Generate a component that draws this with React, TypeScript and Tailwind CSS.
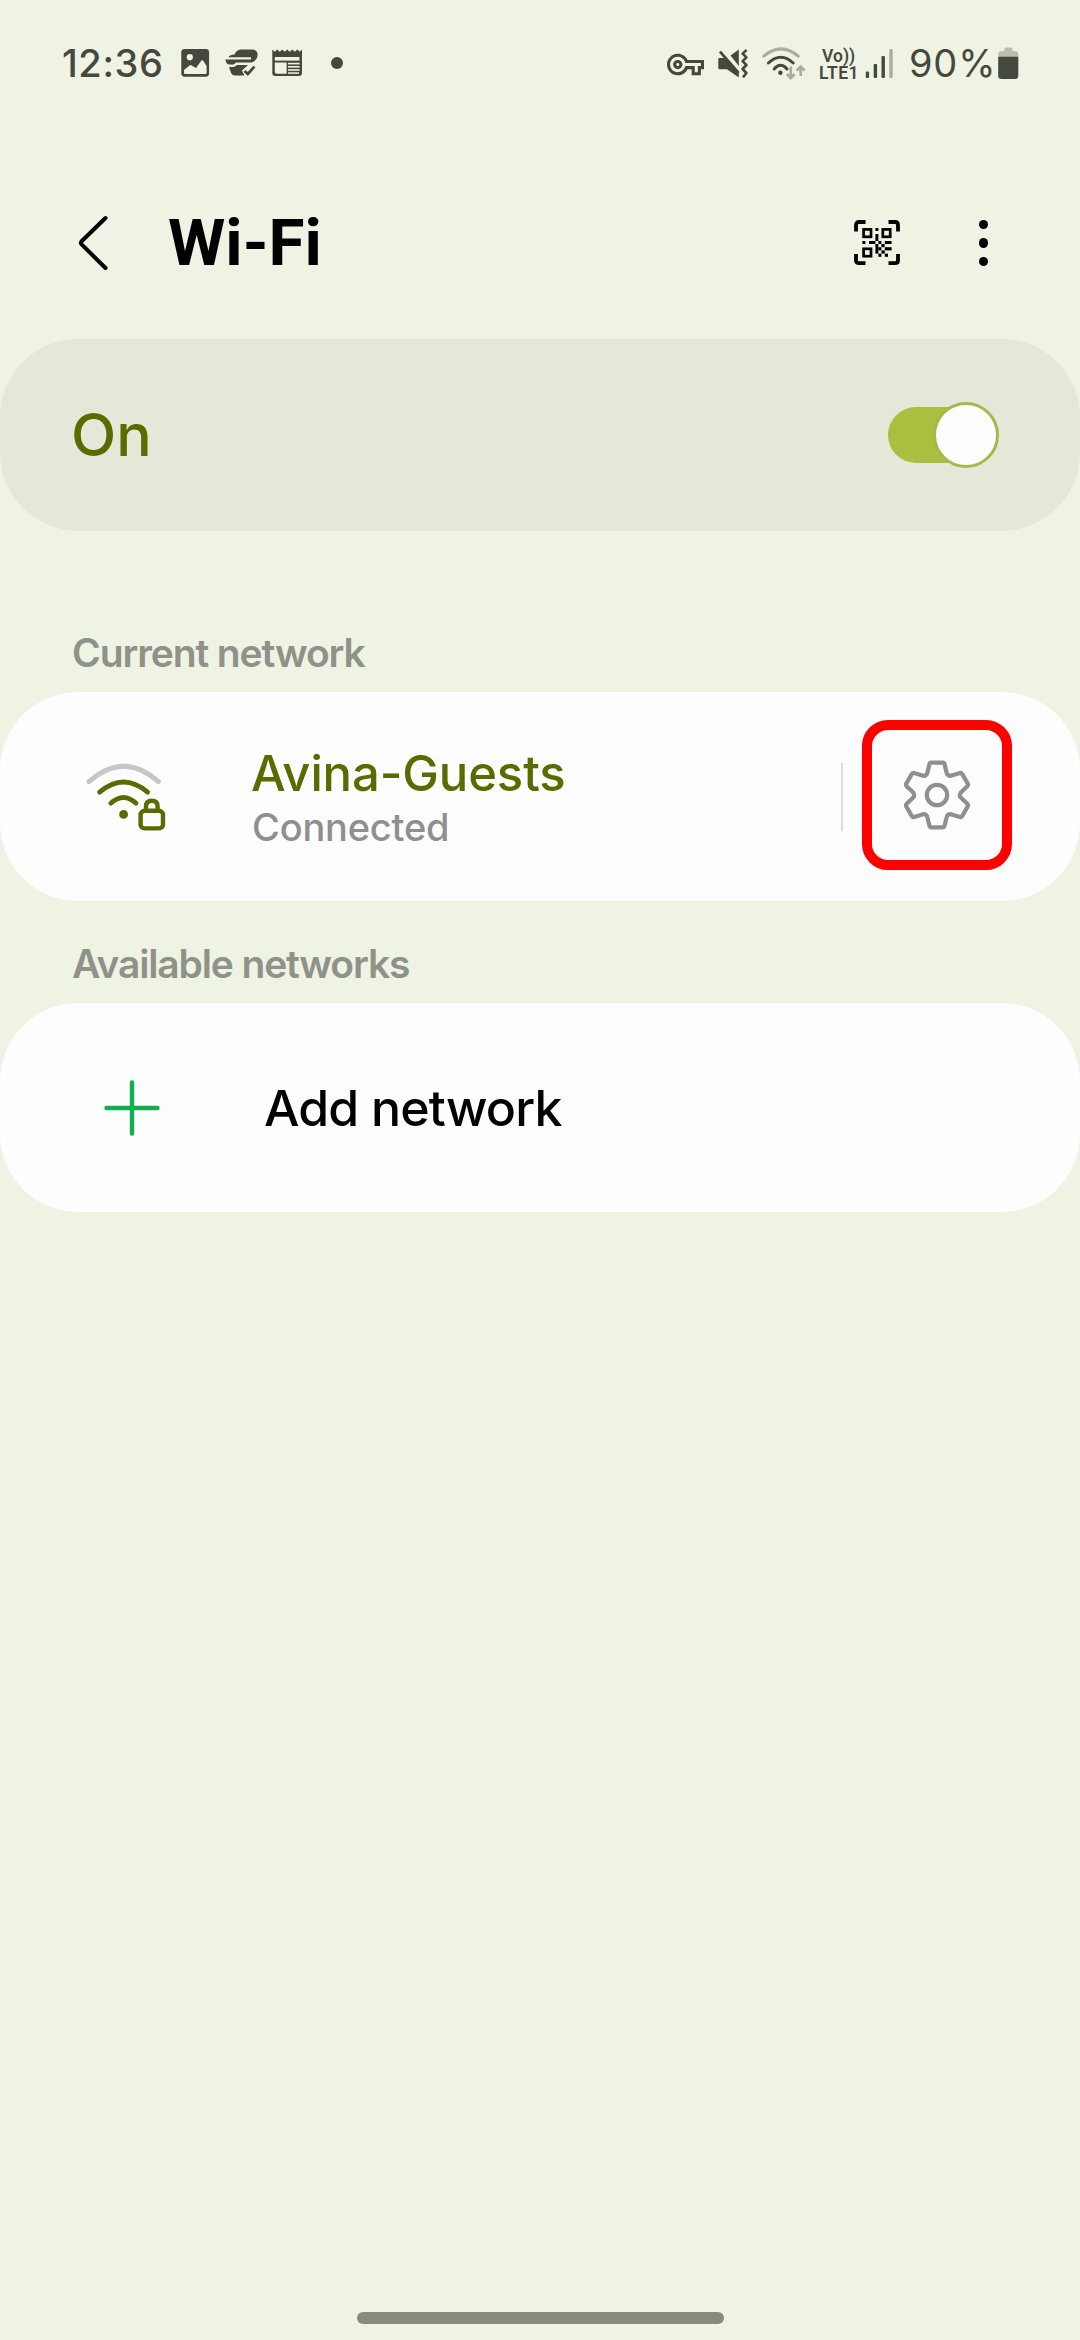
import type { ReactNode } from "react";
import { MdOutlineVpnKey } from "react-icons/md";

const INK = "#45493d";
const PAPER = "#eff3e3";

function PictureIcon() {
  return (
    <svg width="29" height="30" viewBox="0 0 29 30">
      <rect x="0.3" y="0.9" width="27.8" height="27.8" rx="3.4" fill={INK} />
      <circle cx="8.8" cy="9.2" r="3.1" fill={PAPER} />
      <path d="M3 22 L8.6 17.4 Q9.6 16.6 10.6 17.4 L15 20 L20.4 12.6 Q21.2 11.8 22 12.6 L25.6 18 V25 Q25.6 26 24.6 26 H4 Q3 26 3 25 Z" fill={PAPER} />
    </svg>
  );
}

function HandIcon() {
  return (
    <svg width="34" height="30" viewBox="0 0 34 30" fill={INK}>
      <path d="M9.5 6.6 Q11.5 1.5 16.5 1.5 H27 Q32.6 1.5 32.6 7 Q32.6 10.5 30 12.4 Q28 14.6 25 14.6 H11 L8.6 16.6 H4 Q1.4 16.6 0.3 11.6 H26 V9.2 H3.4 Q5 6.8 9.5 6.6 Z" />
      <path d="M4 19 H9 L12 17 H23 L17 22.4 L19.4 27.6 H10 Q6.5 27.6 5.6 23.5 Z" />
      <path d="M19.6 23 L22.8 26 L29.4 18.6" fill="none" stroke={INK} strokeWidth="2.8" />
    </svg>
  );
}

function NewsIcon() {
  return (
    <svg width="31" height="30" viewBox="0 0 31 30">
      <path d="M0.3 1.5 L2.8 3.8 L5.3 1.5 L7.8 3.8 L10.3 1.5 L12.8 3.8 L15.3 1.5 L17.8 3.8 L20.3 1.5 L22.8 3.8 L25.3 1.5 L27.8 3.8 L30 1.5 V25 Q30 28 27 28 H3.3 Q0.3 28 0.3 25 Z" fill={INK} />
      <g fill={PAPER}>
        <rect x="2.8" y="9" width="24.6" height="3.6" />
        <path d="M2.8 14.6 H14.6 V25.8 H4.8 Q2.8 25.8 2.8 23.8 Z" />
        <rect x="16" y="14.8" width="11.6" height="1.6" />
        <rect x="16" y="18" width="11.6" height="1.6" />
        <rect x="16" y="21.2" width="11.6" height="1.6" />
        <rect x="16" y="24.3" width="11" height="1.5" />
      </g>
    </svg>
  );
}

function MuteIcon() {
  return (
    <svg width="30" height="32" viewBox="718 47 30 32">
      <path d="M719.5 58 H724.5 L738.8 73.5 V77.6 L727 69.2 H719.5 Q718.3 69.2 718.3 68 V59.2 Q718.3 58 719.5 58 Z" fill={INK} />
      <path d="M730.5 55.5 L738.8 49.4 V66 Z" fill={INK} />
      <path d="M720 51.6 L738.6 73" stroke={INK} strokeWidth="2.8" />
      <path d="M746.6 50 L742.6 53.6 L746.4 57.4 L742.6 61.2 L746.4 65 L742.6 69 L746.4 73 L743 77.4" fill="none" stroke={INK} strokeWidth="2.6" strokeLinejoin="round" />
    </svg>
  );
}

function StatusWifiIcon() {
  return (
    <svg width="44" height="34" viewBox="762 46 44 34" fill="none" strokeWidth="3" strokeLinecap="round">
      <path d="M763.8 56.2 Q781 41.6 798.2 56.2" stroke="#a9ada0" />
      <path d="M768.4 63 Q780.8 51.6 793.2 63" stroke={INK} />
      <path d="M774.2 69 Q780.6 61.6 787 69" stroke={INK} />
      <circle cx="780.4" cy="72.8" r="2.2" fill={INK} />
      <g stroke="#a9ada0" strokeWidth="2.7" strokeLinecap="butt">
        <path d="M790.8 66.4 V78 M786.8 74 L790.8 78 L794.8 74" />
        <path d="M800.7 76 V66.6 M796.7 70.6 L800.7 66.6 L804.7 70.6" />
      </g>
    </svg>
  );
}

function SignalIcon() {
  return (
    <svg width="28" height="32" viewBox="865 47 28 32" fill={INK}>
      <rect x="865.8" y="71.4" width="3.3" height="6.6" rx="1" />
      <rect x="873.7" y="64" width="3.4" height="14" rx="1" />
      <rect x="881.5" y="56" width="3.4" height="22" rx="1" />
      <rect x="889.3" y="49" width="3.4" height="29" rx="1" fill="#a9ada0" />
    </svg>
  );
}

function BatteryIcon() {
  return (
    <svg width="21" height="32" viewBox="998 47 21 32">
      <path d="M1004.3 51 V49 Q1004.3 47.4 1006 47.4 H1010.6 Q1012.3 47.4 1012.3 49 V51 H1015 Q1018.3 51 1018.3 54.3 V57 H998.2 V54.3 Q998.2 51 1001.5 51 Z" fill="#babeb0" />
      <path d="M998.2 56.8 H1018.3 V75.8 Q1018.3 79 1015 79 H1001.5 Q998.2 79 998.2 75.8 Z" fill={INK} />
    </svg>
  );
}

function StatusBar() {
  return (
    <header className="flex h-[126px] items-center pr-[61px] pl-[62px] text-[38px] leading-[40px] font-medium text-[#45493d]">
      <span className="w-[119px] tracking-[0.6px]">12:36</span>
      <PictureIcon />
      <span className="ml-[15px]"><HandIcon /></span>
      <span className="ml-[13px]"><NewsIcon /></span>
      <span className="ml-[28px] size-3 rounded-full bg-[#45493d]" />
      <div className="ml-auto flex items-center">
        <MdOutlineVpnKey size={37} className="mt-[2px]" />
        <span className="ml-[14px]"><MuteIcon /></span>
        <span className="ml-[14px]"><StatusWifiIcon /></span>
        <span className="ml-[13px] flex w-[46px] flex-col pt-[3px] font-['Roboto',sans-serif] text-[17.5px] leading-[17px] font-semibold">
          <span className="pl-[3px]">Vo))</span>
          <span className="tracking-[0.5px]">LTE1</span>
        </span>
        <SignalIcon />
        <span className="ml-[16px] w-[89px] font-normal tracking-[0.8px]">90%</span>
        <BatteryIcon />
      </div>
    </header>
  );
}

const QR_MODULES: [number, number, number, number][] = [
  [21.4, 8, 3, 3], [21.4, 14, 3, 7], [8.4, 21, 3, 3], [15, 21, 6.4, 3], [24.4, 21, 3, 3], [30.8, 21, 6.8, 3],
  [21.4, 24, 3, 9.6], [27.4, 24, 3.2, 3.2], [24.4, 27.2, 3, 3.2], [30.8, 27.2, 6.8, 3.2], [27.4, 30.4, 3.4, 3.2],
  [24.4, 33.6, 3, 3.2], [30.8, 33.6, 3.2, 3.2],
];

function QrScanIcon() {
  return (
    <svg width="46" height="46" viewBox="0 0 46 46" fill="none" stroke="#000">
      <path d="M2 11.5 V5 Q2 2 5 2 H11.5 M34.5 2 H41 Q44 2 44 5 V11.5 M44 34 V40.5 Q44 43.2 41 43.2 H34.5 M11.5 43.2 H5 Q2 43.2 2 40.5 V34" strokeWidth="3.8" />
      <g strokeWidth="2.7">
        <rect x="9.6" y="9.4" width="7.4" height="7.4" />
        <rect x="28.8" y="9.4" width="7.4" height="7.4" />
        <rect x="9.6" y="28.8" width="7.4" height="7.4" />
      </g>
      <g fill="#000" stroke="none">
        {QR_MODULES.map(([x, y, w, h]) => (
          <rect key={`${x}-${y}`} x={x} y={y} width={w} height={h} />
        ))}
      </g>
    </svg>
  );
}

function TitleBar() {
  return (
    <div className="flex h-[213px] items-start pt-[75px] pr-[92px] pl-[78px] text-black">
      <div className="flex h-[84px] w-full items-center">
        <svg width="30" height="56" viewBox="0 0 30 56">
          <path d="M27.5 3 L3.6 26.2 Q2.2 27.8 3.6 29.4 L27.5 53" fill="none" stroke="#000" strokeWidth="4" strokeLinecap="round" strokeLinejoin="round" />
        </svg>
        <h1 className="-mt-px ml-[60px] font-['Roboto',sans-serif] text-[65.5px] leading-[64px] font-bold">Wi-Fi</h1>
        <span className="ml-auto"><QrScanIcon /></span>
        <div className="ml-[79px] flex flex-col gap-[9.4px]">
          <i className="size-[9.4px] rounded-full bg-black" />
          <i className="size-[9.4px] rounded-full bg-black" />
          <i className="size-[9.4px] rounded-full bg-black" />
        </div>
      </div>
    </div>
  );
}

function Toggle() {
  return (
    <div className="flex h-[56px] w-[111px] items-center justify-end rounded-full bg-[linear-gradient(90deg,#a8bf40_80px,transparent_80px)]">
      <span className="size-[66px] shrink-0 rounded-full border-3 border-[#a5b94a] bg-[#fdfdfd]" />
    </div>
  );
}

function SectionLabel({ className, children }: { className: string; children: ReactNode }) {
  return (
    <h2 className={`flex items-end pl-[72px] text-[39px] leading-[40px] font-semibold text-[#8f9289] ${className}`}>
      {children}
    </h2>
  );
}

function SecureWifiIcon() {
  return (
    <svg width="82" height="72" viewBox="86 760 82 72" fill="none" strokeWidth="4.8" strokeLinecap="round">
      <path d="M89 780.6 Q123.7 749.8 158.4 780.6" stroke="#c6c6c6" />
      <path d="M99.6 791.2 Q123.6 770.8 147.6 791.2" stroke="#5a6b00" />
      <path d="M110.8 802.2 Q123.6 790.6 136 802.2" stroke="#5a6b00" />
      <circle cx="123.6" cy="813.4" r="4.4" fill="#5a6b00" />
      <rect x="140.6" y="809.8" width="22.4" height="17.6" rx="4" stroke="#5a6b00" strokeWidth="4.4" />
      <path d="M146 809 V805.4 Q146 799.8 151.8 799.8 Q157.6 799.8 157.6 805.4 V809" stroke="#5a6b00" strokeWidth="4.4" strokeLinecap="butt" />
    </svg>
  );
}

const polar = (r: number, deg: number) => {
  const a = ((deg - 90) * Math.PI) / 180;
  return `${(r * Math.cos(a)).toFixed(2)} ${(r * Math.sin(a)).toFixed(2)}`;
};

// Six-tooth outline: flat tooth tips joined by rounded valleys.
const GEAR_PATH =
  [0, 60, 120, 180, 240, 300]
    .map((d) => `${d ? "L" : "M"}${polar(32.8, d - 10)} L${polar(32.8, d + 10)} Q${polar(33, d + 13)} ${polar(31, d + 14.5)} L${polar(25, d + 22)} Q${polar(20.6, d + 30)} ${polar(25, d + 38)} L${polar(31, d + 45.5)} Q${polar(33, d + 47)} ${polar(32.8, d + 50)}`)
    .join(" ") + " Z";

function GearIcon() {
  return (
    <svg width="72" height="72" viewBox="-36 -36 72 72" fill="none" stroke="#8f8f8f" strokeWidth="4.2" strokeLinejoin="round">
      <path d={GEAR_PATH} />
      <circle r="10.2" />
    </svg>
  );
}

export default function App() {
  return (
    <div className="relative flex h-[2340px] w-[1080px] flex-col overflow-hidden bg-[#eff3e3] font-['Inter',sans-serif]">
      <StatusBar />
      <TitleBar />

      <section className="flex h-[192px] items-center justify-between rounded-[78px] bg-[#e4e8d9] pr-[81px] pl-[71px]">
        <span className="text-[59px] leading-[60px] font-medium text-[#5a6b00]">On</span>
        <Toggle />
      </section>

      <SectionLabel className="h-[161px] pb-[19px] tracking-[-1.1px]">Current network</SectionLabel>
      <section className="flex h-[209px] items-center rounded-[78px] bg-[#fdfdfd] pr-[68px] pl-[86px]">
        <SecureWifiIcon />
        <div className="ml-[83px] flex flex-col pt-[8px]">
          <span className="text-[49px] leading-[54px] font-medium tracking-[-0.1px] text-[#5a6b00]">Avina-Guests</span>
          <span className="pl-px text-[38px] leading-[53px] font-medium tracking-[-0.2px] text-[#8f8f8f]">Connected</span>
        </div>
        <span className="mr-[19px] ml-auto h-[68px] w-[2px] bg-[#dedede]" />
        <button className="-mt-[3px] flex size-[150px] items-center justify-center rounded-[26px] border-10 border-[#ff0000]">
          <GearIcon />
        </button>
      </section>

      <SectionLabel className="h-[102px] pb-[19px] tracking-[-1.15px]">Available networks</SectionLabel>
      <section className="flex h-[209px] items-center rounded-[78px] bg-[#fdfdfd] pl-[104px]">
        <svg width="56" height="56" viewBox="0 0 56 56">
          <path d="M28 2.5 V53.5 M2.5 28 H53.5" stroke="#12ad4e" strokeWidth="4.4" strokeLinecap="round" />
        </svg>
        <span className="ml-[104px] text-[50px] leading-[54px] font-medium tracking-[-0.8px] text-black">Add network</span>
      </section>

      <div className="mt-auto mb-[16px] h-[12px] w-[367px] self-center rounded-full bg-[#878b80]" />
    </div>
  );
}
